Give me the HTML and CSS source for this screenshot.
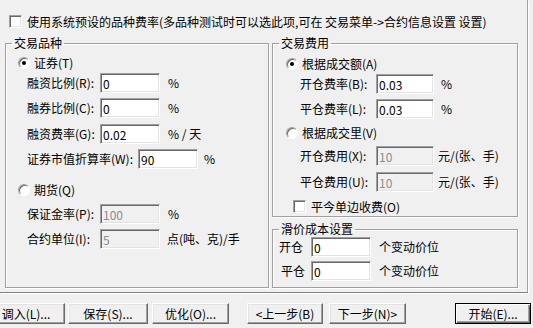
FILE: index.html
```html
<!DOCTYPE html>
<html lang="zh-CN">

<head>
  <meta charset="UTF-8" />
  <title>交易设置</title>
  <link rel="stylesheet" href="styles.css">
</head>

<body>
  <div class="panel">
    <div class="top-check">
      <span class="checkbox"></span>
      <span>使用系统预设的品种费率(多品种测试时可以选此项,可在 交易菜单-&gt;合约信息设置 设置)</span>
    </div>

    <div class="columns">
      <fieldset class="group kinds">
        <legend>交易品种</legend>
        <div class="radio-row mt6"><span class="radio on"></span>证券(T)</div>
        <div class="field mt4"><span class="lbl w73">融资比例(R):</span><input class="input" value="0"><span class="unit u8">%</span></div>
        <div class="field mt5"><span class="lbl w73">融券比例(C):</span><input class="input" value="0"><span class="unit u8">%</span></div>
        <div class="field mt6"><span class="lbl w73">融资费率(G):</span><input class="input" value="0.02"><span class="unit u8">% / 天</span></div>
        <div class="field mt5"><span class="lbl w111">证券市值折算率(W):</span><input class="input" value="90"><span class="unit u6">%</span></div>
        <div class="radio-row mt14"><span class="radio"></span>期货(Q)</div>
        <div class="field mt8"><span class="lbl w73">保证金率(P):</span><input class="input" value="100" disabled><span class="unit u8">%</span></div>
        <div class="field mt5"><span class="lbl w73">合约单位(I):</span><input class="input" value="5" disabled><span class="unit u7">点(吨、克)/手</span></div>
      </fieldset>

      <div class="right-col">
        <fieldset class="group fees">
          <legend>交易费用</legend>
          <div class="radio-row mt7"><span class="radio on"></span>根据成交额(A)</div>
          <div class="field mt4"><span class="lbl w76">开仓费率(B):</span><input class="input short" value="0.03"><span class="unit u7">%</span></div>
          <div class="field mt5"><span class="lbl w76">平仓费率(L):</span><input class="input short" value="0.03"><span class="unit u7">%</span></div>
          <div class="radio-row mt7"><span class="radio"></span>根据成交里(V)</div>
          <div class="field mt7"><span class="lbl w76">开仓费用(X):</span><input class="input short" value="10" disabled><span class="unit u4">元/(张、手)</span></div>
          <div class="field mt6"><span class="lbl w76">平仓费用(U):</span><input class="input short" value="10" disabled><span class="unit u4">元/(张、手)</span></div>
          <div class="check-row mt8"><span class="checkbox"></span>平今单边收费(O)</div>
        </fieldset>

        <fieldset class="group slip">
          <legend>滑价成本设置</legend>
          <div class="field mt1"><span class="lbl w32">开仓</span><input class="input" value="0"><span class="unit u8">个变动价位</span></div>
          <div class="field mt4 indent"><span class="lbl w30">平仓</span><input class="input" value="0"><span class="unit u8">个变动价位</span></div>
        </fieldset>
      </div>
    </div>
  </div>

  <div class="buttons">
    <button class="btn b-load">调入(L)...</button>
    <button class="btn b-save">保存(S)...</button>
    <button class="btn b-opt">优化(O)...</button>
    <button class="btn b-prev">&lt;上一步(B)</button>
    <button class="btn b-next">下一步(N)&gt;</button>
    <button class="btn default b-start">开始(E)...</button>
  </div>
</body>

</html>
```

FILE: styles.css
```css
* {
  box-sizing: border-box;
}

body {
  margin: 0;
  width: 533px;
  height: 328px;
  overflow: hidden;
  background-color: #f0f0f0;
  color: #000;
  font-family: "Noto Sans CJK SC", "Liberation Sans", sans-serif;
  font-size: 12px;
  line-height: 14px;
}

/* outer tab page, only its right and bottom edge are visible */
.panel {
  width: 528px;
  height: 293px;
  padding-top: 15px;
  border-right: 1px solid #a0a0a0;
  border-bottom: 1px solid #808080;
  box-shadow: 1px 1px 0 #fff;
}

.top-check,
.check-row {
  display: flex;
  align-items: center;
  height: 13px;
}

.top-check {
  margin-left: 9px;
}

.checkbox {
  flex: none;
  width: 13px;
  height: 13px;
  margin-right: 5px;
  background-color: #fff;
  border: 1px solid;
  border-color: #a0a0a0 #fff #fff #a0a0a0;
  box-shadow: inset 1px 1px 0 #696969, inset -1px -1px 0 #e3e3e3;
}

.columns {
  display: flex;
  margin-top: 8px;
  margin-left: 5px;
}

/* etched group boxes */
.group {
  margin: 0;
  padding: 0;
  min-width: 0;
  border: 1px solid #a0a0a0;
  box-shadow: inset 1px 1px 0 #fff, 1px 1px 0 #fff;
}

.group legend {
  margin-left: 6px;
  padding: 0 2px;
  height: 14px;
  line-height: 14px;
}

.kinds {
  width: 264px;
  height: 252px;
}

.right-col {
  display: flex;
  flex-direction: column;
  margin-left: 3px;
}

.fees {
  width: 246px;
  height: 181px;
}

.slip {
  width: 246px;
  height: 66px;
  margin-top: 5px;
}

.radio-row {
  display: flex;
  align-items: center;
  height: 13px;
}

.kinds .radio-row {
  margin-left: 12px;
}

.fees .radio-row {
  margin-left: 13px;
}

.radio {
  position: relative;
  flex: none;
  width: 12px;
  height: 12px;
  margin-right: 4px;
  border-radius: 50%;
  background-color: #fff;
  border: 1px solid;
  border-color: #a0a0a0 #fff #fff #a0a0a0;
  box-shadow: inset 1px 1px 0 #696969;
}

.radio.on::after {
  content: "";
  position: absolute;
  left: 3px;
  top: 3px;
  width: 4px;
  height: 4px;
  border-radius: 50%;
  background-color: #000;
}

.field {
  display: flex;
  align-items: center;
  height: 20px;
}

.kinds .field {
  margin-left: 21px;
}

.fees .field {
  margin-left: 27px;
}

.fees .check-row {
  margin-left: 20px;
}

.slip .field {
  margin-left: 6px;
}

.slip .field.indent {
  margin-left: 8px;
}

.lbl {
  flex: none;
  white-space: nowrap;
}

.w30 { width: 30px; }
.w32 { width: 32px; }
.w73 { width: 73px; }
.w76 { width: 76px; }
.w111 { width: 111px; }

.input {
  flex: none;
  width: 60px;
  height: 20px;
  padding: 0 2px;
  font: inherit;
  color: #000;
  background-color: #fff;
  border: 1px solid;
  border-color: #a0a0a0 #fff #fff #a0a0a0;
  box-shadow: inset 1px 1px 0 #696969, inset -1px -1px 0 #e3e3e3;
  outline: none;
}

.input.short {
  width: 58px;
}

.input:disabled {
  background-color: #f0f0f0;
  color: #8d8d8d;
}

.unit {
  white-space: nowrap;
}

.u4 { margin-left: 4px; }
.u6 { margin-left: 6px; }
.u7 { margin-left: 7px; }
.u8 { margin-left: 8px; }

.mt1 { margin-top: 1px; }
.mt4 { margin-top: 4px; }
.mt5 { margin-top: 5px; }
.mt6 { margin-top: 6px; }
.mt7 { margin-top: 7px; }
.mt8 { margin-top: 8px; }
.mt14 { margin-top: 14px; }

/* bottom button bar */
.buttons {
  display: flex;
  margin-top: 10px;
}

.btn {
  flex: none;
  height: 21px;
  padding: 0;
  font: inherit;
  color: #000;
  background-color: #f0f0f0;
  border: 1px solid;
  border-color: #fff #696969 #696969 #fff;
  box-shadow: inset -1px -1px 0 #a0a0a0, inset 1px 1px 0 #e3e3e3;
  white-space: nowrap;
}

.btn.default {
  border-color: #000;
  box-shadow: inset 1px 1px 0 #fff, inset -1px -1px 0 #696969, inset -2px -2px 0 #a0a0a0;
}

.b-load { margin-left: -13px; width: 78px; }
.b-save { margin-left: 3px; width: 80px; }
.b-opt { margin-left: 4px; width: 77px; }
.b-prev { margin-left: 18px; width: 76px; }
.b-next { margin-left: 6px; width: 77px; }
.b-start { margin-left: 49px; width: 76px; }
```
